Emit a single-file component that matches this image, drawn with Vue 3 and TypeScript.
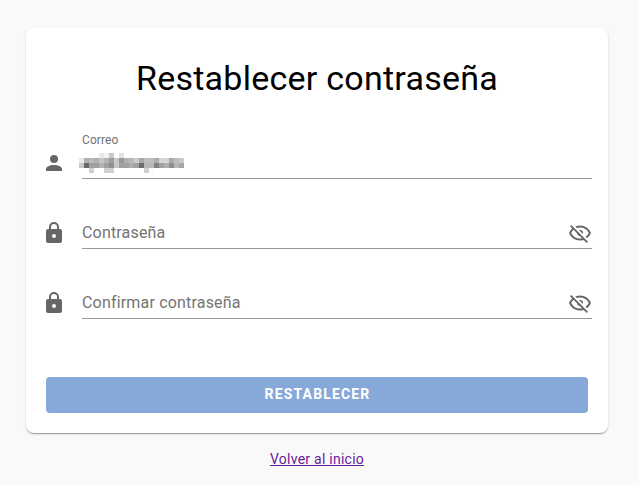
<script setup lang="ts">
import { ref } from 'vue'

const password = ref('')
const confirmation = ref('')

// Grey levels of the pixelated address, 21 columns per row; 255 is blank.
const mosaic: number[][] = [
  [255, 255, 255, 255, 232, 242, 200, 255, 226, 255, 255, 255, 255, 255, 255, 255, 255, 255, 255, 255, 255],
  [232, 176, 184, 176, 196, 180, 158, 200, 152, 178, 184, 204, 168, 190, 190, 172, 214, 214, 172, 190, 202],
  [200, 104, 160, 160, 178, 160, 144, 200, 160, 160, 172, 160, 108, 184, 184, 128, 160, 176, 144, 184, 164],
  [255, 255, 208, 255, 255, 208, 208, 255, 255, 255, 255, 255, 255, 208, 250, 255, 255, 255, 255, 255, 255],
]
</script>

<template>
  <main class="page">
    <form class="card" @submit.prevent>
      <h1 class="title">Restablecer contraseña</h1>

      <div class="row">
        <svg class="icon" viewBox="0 0 24 24">
          <path d="M12 4a4 4 0 1 1 0 8 4 4 0 0 1 0-8m0 10c4.42 0 8 1.79 8 4v2H4v-2c0-2.21 3.58-4 8-4z" />
        </svg>
        <div class="field filled">
          <span class="floating">Correo</span>
          <div class="mosaic">
            <template v-for="(line, y) in mosaic" :key="y">
              <i v-for="(v, x) in line" :key="x" :style="{ background: `rgb(${v},${v},${v})` }"></i>
            </template>
          </div>
        </div>
      </div>

      <div class="row">
        <svg class="icon" viewBox="0 0 24 24">
          <path d="M12 17a2 2 0 0 0 2-2 2 2 0 0 0-2-2 2 2 0 0 0-2 2 2 2 0 0 0 2 2m6-9a2 2 0 0 1 2 2v10a2 2 0 0 1-2 2H6a2 2 0 0 1-2-2V10a2 2 0 0 1 2-2h1V6a5 5 0 0 1 10 0v2h1m-6-5a3 3 0 0 0-3 3v2h6V6a3 3 0 0 0-3-3z" />
        </svg>
        <div class="field">
          <input v-model="password" type="password" placeholder="Contraseña" />
          <svg class="icon eye" viewBox="0 0 24 24">
            <path d="M2 5.27L3.28 4 20 20.72 18.73 22l-3.08-3.08c-1.15.38-2.37.58-3.65.58-5 0-9.27-3.11-11-7.5.69-1.76 1.79-3.31 3.19-4.54L2 5.27M12 9a3 3 0 0 1 3 3 3 3 0 0 1-.17 1L11 9.17A3 3 0 0 1 12 9m0-4.5c5 0 9.27 3.11 11 7.5a11.79 11.79 0 0 1-4 5.19l-1.42-1.43A9.862 9.862 0 0 0 20.82 12 9.821 9.821 0 0 0 12 6.5c-1.09 0-2.16.18-3.16.5L7.3 5.47C8.74 4.85 10.33 4.5 12 4.5M3.18 12A9.821 9.821 0 0 0 12 17.5c.69 0 1.37-.07 2-.21L11.72 15A3.064 3.064 0 0 1 9 12.28L5.6 8.87C4.61 9.72 3.78 10.78 3.18 12z" />
          </svg>
        </div>
      </div>

      <div class="row">
        <svg class="icon" viewBox="0 0 24 24">
          <path d="M12 17a2 2 0 0 0 2-2 2 2 0 0 0-2-2 2 2 0 0 0-2 2 2 2 0 0 0 2 2m6-9a2 2 0 0 1 2 2v10a2 2 0 0 1-2 2H6a2 2 0 0 1-2-2V10a2 2 0 0 1 2-2h1V6a5 5 0 0 1 10 0v2h1m-6-5a3 3 0 0 0-3 3v2h6V6a3 3 0 0 0-3-3z" />
        </svg>
        <div class="field">
          <input v-model="confirmation" type="password" placeholder="Confirmar contraseña" />
          <svg class="icon eye" viewBox="0 0 24 24">
            <path d="M2 5.27L3.28 4 20 20.72 18.73 22l-3.08-3.08c-1.15.38-2.37.58-3.65.58-5 0-9.27-3.11-11-7.5.69-1.76 1.79-3.31 3.19-4.54L2 5.27M12 9a3 3 0 0 1 3 3 3 3 0 0 1-.17 1L11 9.17A3 3 0 0 1 12 9m0-4.5c5 0 9.27 3.11 11 7.5a11.79 11.79 0 0 1-4 5.19l-1.42-1.43A9.862 9.862 0 0 0 20.82 12 9.821 9.821 0 0 0 12 6.5c-1.09 0-2.16.18-3.16.5L7.3 5.47C8.74 4.85 10.33 4.5 12 4.5M3.18 12A9.821 9.821 0 0 0 12 17.5c.69 0 1.37-.07 2-.21L11.72 15A3.064 3.064 0 0 1 9 12.28L5.6 8.87C4.61 9.72 3.78 10.78 3.18 12z" />
          </svg>
        </div>
      </div>

      <button class="submit" type="submit">RESTABLECER</button>
    </form>
    <a class="back" href="#">Volver al inicio</a>
  </main>
</template>

<style>
body {
  margin: 0;
  background: #f9f9f9;
}
</style>

<style scoped>
.page {
  box-sizing: border-box;
  height: 485px;
  padding: 28px 31px 0 26px;
  display: flex;
  flex-direction: column;
  align-items: stretch;
  font-family: Roboto, sans-serif;
  overflow: hidden;
}
.card {
  box-sizing: border-box;
  height: 405px;
  padding: 26px 16px 20px;
  display: flex;
  flex-direction: column;
  border-radius: 8px;
  background: #fff;
  box-shadow: 0 2px 1px -1px rgba(0, 0, 0, 0.2), 0 1px 1px rgba(0, 0, 0, 0.14), 0 1px 3px rgba(0, 0, 0, 0.12);
}
.title {
  margin: 0 0 27px;
  font-size: 34px;
  line-height: 48px;
  font-weight: 400;
  letter-spacing: 0.25px;
  text-align: center;
  color: #000;
}
.row {
  height: 50px;
  margin-bottom: 20px;
  display: flex;
  align-items: flex-end;
}
.icon {
  flex: none;
  width: 24px;
  height: 24px;
  margin-bottom: 4px;
  fill: #666;
}
.field {
  box-sizing: border-box;
  flex: 1;
  height: 32px;
  margin-left: 16px;
  display: flex;
  align-items: center;
  border-bottom: 1px solid #999;
}
.field.filled {
  height: 50px;
  flex-direction: column;
  align-items: flex-start;
}
.floating {
  margin-top: 3px;
  font-size: 12px;
  line-height: 16px;
  letter-spacing: 0.1px;
  color: #737373;
}
.mosaic {
  margin: 5px 0 0 -3px;
  display: grid;
  grid-template-columns: repeat(21, 5px);
  grid-auto-rows: 5px;
}
input {
  flex: 1;
  min-width: 0;
  padding: 0;
  border: 0;
  outline: 0;
  background: transparent;
  font: 400 16px/24px Roboto, sans-serif;
  letter-spacing: 0.18px;
}
input::placeholder {
  color: #737373;
  opacity: 1;
}
.eye {
  margin-bottom: 0;
}
.submit {
  height: 36px;
  margin: auto 4px 0;
  padding: 0 0 2px 1px;
  border: 0;
  border-radius: 4px;
  background: #87a9da;
  color: #fff;
  font: 700 14px/34px Roboto, sans-serif;
  letter-spacing: 1.15px;
}
.back {
  align-self: center;
  margin-top: 16px;
  font-size: 14px;
  line-height: 20px;
  letter-spacing: 0.25px;
  color: #6a1b9a;
}
</style>
